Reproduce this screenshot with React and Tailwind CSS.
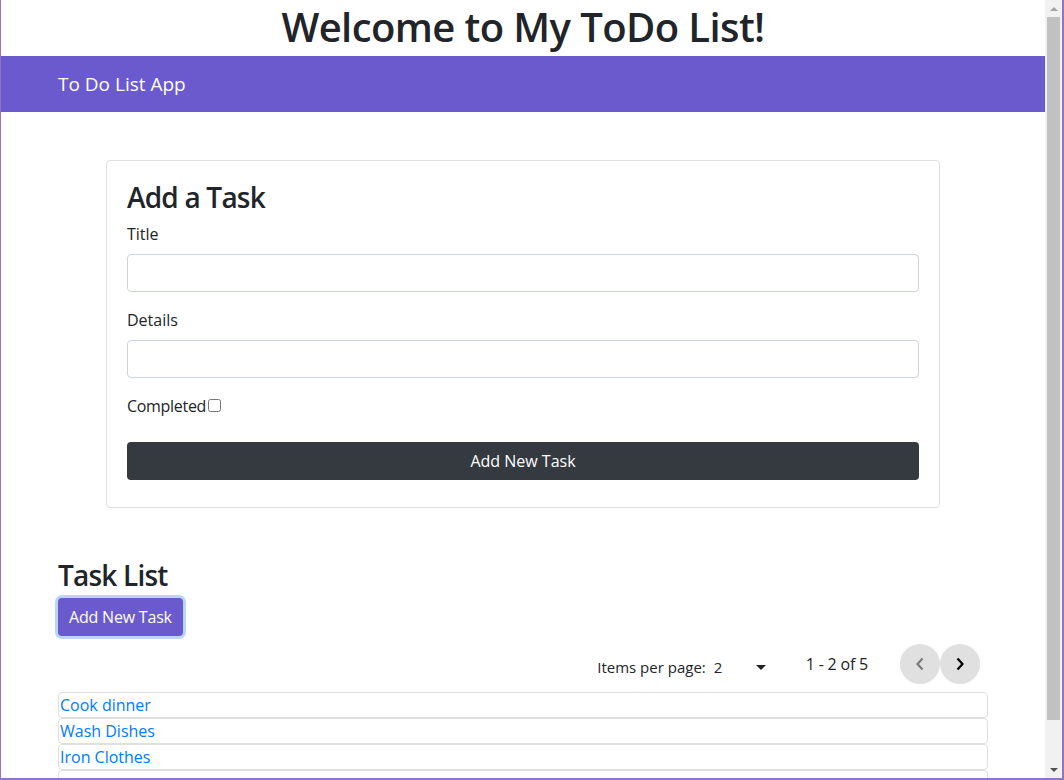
import { useState } from "react";

const tasks = ["Cook dinner", "Wash Dishes", "Iron Clothes", ""];

function Chevron({ dir, className }) {
  return (
    <svg width="10" height="14" viewBox="0 0 10 14" className={className}>
      {dir === "left" ? (
        <path d="M7.5 1.5 L2.5 7 L7.5 12.5" fill="none" stroke="currentColor" strokeWidth="2.2" />
      ) : (
        <path d="M2.5 1.5 L7.5 7 L2.5 12.5" fill="none" stroke="currentColor" strokeWidth="2.2" />
      )}
    </svg>
  );
}

function Scrollbar() {
  return (
    <div className="w-[17px] h-full bg-[#f1f1f1] flex flex-col items-center shrink-0">
      <div className="h-[17px] w-full flex items-center justify-center">
        <div className="w-0 h-0 border-l-[4px] border-r-[4px] border-b-[4px] border-l-transparent border-r-transparent border-b-[#a3a3a3]" />
      </div>
      <div className="w-[13px] h-[703px] bg-[#c1c1c1]" />
      <div className="flex-1" />
      <div className="h-[17px] w-full flex items-center justify-center">
        <div className="w-0 h-0 border-l-[4px] border-r-[4px] border-t-[4px] border-l-transparent border-r-transparent border-t-[#505050]" />
      </div>
    </div>
  );
}

export default function App() {
  const [title, setTitle] = useState("");
  const [details, setDetails] = useState("");
  const [completed, setCompleted] = useState(false);

  return (
    <div
      className="w-[1064px] h-[780px] flex border-l border-r-2 border-b-2 border-[#8f75c4] bg-white text-[#212529] overflow-hidden"
      style={{ fontFamily: '"Open Sans", sans-serif' }}
    >
      <div className="flex-1 flex flex-col overflow-hidden">
        <h1 className="text-[40px] leading-[48px] font-semibold tracking-[-0.6px] text-center pt-[3px] mb-[5px]">
          Welcome to My ToDo List!
        </h1>

        <nav className="h-[56px] bg-[#6a5acd] flex items-center px-[57px] shrink-0">
          <span className="text-white text-[19px] leading-[30px]">To Do List App</span>
        </nav>

        <div className="px-[57px] pt-[48px]">
          <div className="mx-[48px] border border-[#dfdfdf] rounded p-5 pb-[27px]">
            <h3 className="text-[28px] leading-[33px] font-semibold tracking-[-0.8px] mb-2">Add a Task</h3>
            <label className="block text-base leading-6 mb-2">Title</label>
            <input
              value={title}
              onChange={(e) => setTitle(e.target.value)}
              className="block w-full h-[38px] border border-[#ced4da] rounded px-3 mb-4"
            />
            <label className="block text-base leading-6 mb-2">Details</label>
            <input
              value={details}
              onChange={(e) => setDetails(e.target.value)}
              className="block w-full h-[38px] border border-[#ced4da] rounded px-3 mb-4"
            />
            <div className="flex items-center text-base leading-6 mb-6">
              <span className="tracking-[-0.3px]">Completed</span>
              <input
                type="checkbox"
                checked={completed}
                onChange={(e) => setCompleted(e.target.checked)}
                className="w-[13px] h-[13px] ml-[2px] mb-[2px]"
              />
            </div>
            <button className="w-full h-[38px] bg-[#343a40] text-white rounded text-base">Add New Task</button>
          </div>

          <h3 className="text-[28px] leading-[33px] font-semibold tracking-[-0.8px] mt-[51px] mb-[6px]">Task List</h3>
          <button className="h-[38px] px-[11px] bg-[#6a5acd] text-white rounded text-base tracking-[-0.2px] ring-[3px] ring-[#bcd6fb]">
            Add New Task
          </button>

          <div className="flex items-center justify-end h-[40px] mt-2 pr-2">
            <span className="text-[15px] mr-2 mt-[6px]">Items per page:</span>
            <div className="w-[52px] flex items-center justify-between text-[15px] mr-[40px] mt-[6px]">
              <span>2</span>
              <div className="w-0 h-0 border-l-[5px] border-r-[5px] border-t-[5px] border-l-transparent border-r-transparent border-t-[#222]" />
            </div>
            <span className="text-[16px] tracking-[-0.2px] mr-[32px]">1 - 2 of 5</span>
            <button className="w-10 h-10 rounded-full bg-[#e0e0e0] flex items-center justify-center text-[#7a7a7a]">
              <Chevron dir="left" />
            </button>
            <button className="w-10 h-10 rounded-full bg-[#e0e0e0] flex items-center justify-center text-black">
              <Chevron dir="right" />
            </button>
          </div>

          <ul className="mt-2">
            {tasks.map((t, i) => (
              <li key={i} className="border border-[#dfdfdf] rounded h-[26px] px-[1px] text-base leading-6 text-[#007bff]">
                {t}
              </li>
            ))}
          </ul>
        </div>
      </div>
      <Scrollbar />
    </div>
  );
}
